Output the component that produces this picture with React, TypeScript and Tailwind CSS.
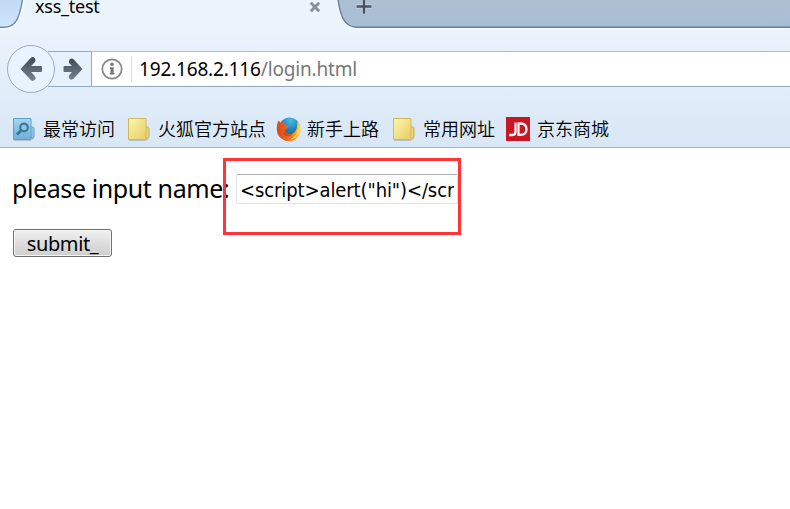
import React from "react";

const uiFont = "font-['Noto_Sans','Noto_Sans_CJK_SC',sans-serif]";

function TabStrip() {
  return (
    <div className="relative flex h-[28px] shrink-0 items-start">
      <svg className="absolute inset-0" width="790" height="31" viewBox="0 0 790 31">
        <defs>
          <linearGradient id="left" x1="0" y1="0" x2="0" y2="1">
            <stop offset="0" stopColor="#c3daf4" />
            <stop offset="1" stopColor="#cfe5fc" />
          </linearGradient>
          <linearGradient id="strip" x1="0" y1="0" x2="0" y2="1">
            <stop offset="0" stopColor="#adc0d3" />
            <stop offset="1" stopColor="#a9bdd5" />
          </linearGradient>
        </defs>
        <path d="M0 29.2H4C15 29 20 22 24 0" fill="none" stroke="#f5faff" strokeWidth="1.5" />
        <path d="M0 0H22.5C19 20 15 27.3 4 27.3H0Z" fill="url(#left)" />
        <path d="M22.5 0C19 20 15 27.3 4 27.3H0" fill="none" stroke="#7389a4" strokeWidth="1.4" />
        <path d="M337 0C340 22 346 29 359 29H790" fill="none" stroke="#f5faff" strokeWidth="1.5" />
        <path d="M338 0C341 20 346 27.3 358 27.3H790V0Z" fill="url(#strip)" />
        <path d="M338 0C341 20 346 27.3 358 27.3H790" fill="none" stroke="#657e99" strokeWidth="1.4" />
      </svg>
      <span className="relative ml-[35px] w-[274px] whitespace-nowrap text-[18px] leading-[12px] tracking-[-0.25px]">xss_test</span>
      <svg className="relative mt-[1px]" width="12" height="12" viewBox="0 0 12 12">
        <path d="M1.8 1.8 10.2 10.2M10.2 1.8 1.8 10.2" stroke="#87919c" strokeWidth="2.9" />
      </svg>
      <svg className="relative ml-[35px]" width="16" height="14" viewBox="0 0 16 14">
        <path d="M0 6.4H16M8 -2V14" stroke="#d2deea" strokeWidth="4" />
        <path d="M.5 6.4H15.5M8 -2V13.7" stroke="#465361" strokeWidth="2.5" />
      </svg>
    </div>
  );
}

function NavigationBar() {
  return (
    <div className="mt-[17px] flex h-[48px] shrink-0 items-center">
      <svg className="shrink-0" width="92" height="48" viewBox="0 0 92 48">
        <defs>
          <linearGradient id="arrow" x1="0" y1="0" x2="0" y2="1">
            <stop offset="0" stopColor="#3f4953" />
            <stop offset="1" stopColor="#778591" />
          </linearGradient>
        </defs>
        <path d="M48 6.5H91.5V41.5H48" fill="#e7f1fc" stroke="#94a8bf" />
        <circle cx="31" cy="24" r="23.5" fill="#e9f3fd" stroke="#98abc2" />
        <path d="M20.5 24 31 12.8Q33 11 35 13.5Q36.3 16 34.3 17.7L31 21H41Q42 21 42 22V26Q42 27 41 27H31L34.3 30.5Q36.3 32.5 35 34.5Q33 37 31 35.2Z" fill="url(#arrow)" />
        <path d="M82.5 24 73.5 14.2Q71.5 12.5 69.5 14.5Q68 17 69.7 18.7L72 21H64.5Q63.5 21 63.5 22V26Q63.5 27 64.5 27H72L69.7 29.5Q68 31.5 69.5 33.7Q71.5 35.5 73.5 33.8Z" fill="url(#arrow)" />
      </svg>
      <div className="flex h-[36px] flex-1 items-center border-y border-t-[#aebdce] border-b-[#8fa6be] bg-white">
        <svg className="ml-[9px] shrink-0" width="22" height="22" viewBox="0 0 22 22">
          <circle cx="11" cy="11" r="9.7" fill="none" stroke="#858585" strokeWidth="1.7" />
          <circle cx="11" cy="6.3" r="1.8" fill="#777" />
          <path d="M9 9.2H12.7V15H13.5V16.5H8.7V15H9.5V11H9Z" fill="#777" />
        </svg>
        <div className="ml-[8px] h-[26px] w-px bg-[#dddddd]" />
        <span className="ml-[7px] whitespace-nowrap text-[19px] leading-[26px] tracking-[-0.17px] text-[#777]">
          <span className="text-black">192.168.2.116</span>/login.html
        </span>
      </div>
    </div>
  );
}

function FolderIcon({ blue = false }: { blue?: boolean }) {
  return (
    <svg width="25" height="25" viewBox="0 0 25 25">
      <defs>
        <linearGradient id="yellow" x1="0" y1="0" x2="1" y2="1">
          <stop offset="0" stopColor="#fff5ae" />
          <stop offset="1" stopColor="#e8cd62" />
        </linearGradient>
        <linearGradient id="blue" x1="0" y1="0" x2="0" y2="1">
          <stop offset="0" stopColor="#a5d6ef" />
          <stop offset="1" stopColor="#70afd4" />
        </linearGradient>
      </defs>
      <path d="M2 23.4H18L21.5 21.5" fill="none" stroke="#9cabb4" strokeOpacity=".65" strokeWidth="1.3" />
      <path d="M18.5 10H20.5Q22 10 22 11.5V19.5Q22 21 20.5 21H18.5Z" fill={blue ? "#8fc5e3" : "#ecd778"} stroke={blue ? "#60a0c9" : "#c6ac4b"} />
      <path d="M1.5 1.5H19V21.5Q19 22.5 18 22.5H1.5Z" fill={blue ? "url(#blue)" : "url(#yellow)"} stroke={blue ? "#60a0c9" : "#d0b956"} />
      {blue && (
        <g fill="none" stroke="#3e789e" strokeWidth="2.2">
          <circle cx="12" cy="10.5" r="3.8" />
          <path d="M9 13.5 5 17.5" strokeWidth="3" />
        </g>
      )}
    </svg>
  );
}

function FirefoxIcon() {
  return (
    <svg width="25" height="25" viewBox="0 0 25 25">
      <defs>
        <radialGradient id="globe" cx=".55" cy=".15" r=".85">
          <stop offset="0" stopColor="#43c0e4" />
          <stop offset=".5" stopColor="#2583bd" />
          <stop offset="1" stopColor="#174b91" />
        </radialGradient>
        <linearGradient id="flame" x1="0" y1="0" x2="1" y2="0">
          <stop offset="0" stopColor="#d8481f" />
          <stop offset=".6" stopColor="#f0741c" />
          <stop offset="1" stopColor="#ffd747" />
        </linearGradient>
      </defs>
      <circle cx="13.5" cy="11" r="10.5" fill="url(#globe)" />
      <path d="M2.5 3.5 5 6 8 4.5 8.5 7.5 12.5 8.5 11.5 11 9.2 12.5C8 16 13 18 16.5 16.5C20.5 15 21.5 10 21 5L22 4.5C26 10 25.5 18 20 22C14 26 6 24 2.5 18.5C0 14 .5 8 2.5 3.5Z" fill="url(#flame)" />
      <path d="M23.5 8C26 15 20 23.5 12 22.5C19 21 22.5 16 22.3 8Z" fill="#ffd34f" />
      <path d="M7 16.5C9.5 20.5 14 19.5 16.5 17.5C13 18 10 16.5 9.2 13.5Z" fill="#d94b18" />
    </svg>
  );
}

function JdIcon() {
  return (
    <svg width="24" height="24" viewBox="0 0 24 24">
      <rect width="24" height="24" fill="#c81623" />
      <path d="M9.5 5.5V14.5Q9.5 18 6.5 18H3M12.5 6.5V17.8H14.5Q20.5 17.8 20.5 12.2Q20.5 6.5 14.5 6.5H11.5" fill="none" stroke="#fff2f3" strokeWidth="2.3" />
    </svg>
  );
}

const bookmarks = [
  { label: "最常访问", icon: <FolderIcon blue /> },
  { label: "火狐官方站点", icon: <FolderIcon /> },
  { label: "新手上路", icon: <FirefoxIcon /> },
  { label: "常用网址", icon: <FolderIcon /> },
  { label: "京东商城", icon: <JdIcon /> },
];

function BookmarksBar() {
  return (
    <nav className="mt-auto grid h-[36px] grid-cols-[115px_149px_116px_114px_auto] items-center pl-[12px]">
      {bookmarks.map(({ label, icon }) => (
        <div key={label} className="flex items-center">
          <span className="w-[31px] shrink-0">{icon}</span>
          <span className="whitespace-nowrap pb-[2px] font-['Noto_Sans_CJK_SC',sans-serif] text-[18px] font-[350] leading-[24px]">{label}</span>
        </div>
      ))}
    </nav>
  );
}

export default function App() {
  return (
    <div className={`flex h-[509px] w-[790px] flex-col overflow-hidden bg-white text-black ${uiFont}`}>
      <header className="flex h-[148px] shrink-0 flex-col border-b border-[#a5b7ce] bg-linear-to-b from-[#ebf3fc] from-20% to-[#d8e7f6]">
        <TabStrip />
        <NavigationBar />
        <BookmarksBar />
      </header>
      <main className="relative pl-[12px] pt-[26px]">
        <div className="flex h-[30px] items-center">
          <label htmlFor="name" className="w-[224px] whitespace-nowrap pb-[2px] text-[25px] leading-[28px] tracking-[-0.4px]">please input name:</label>
          <input id="name" readOnly defaultValue={'<script>alert("hi")</scr'} className="h-[30px] w-[222px] rounded-[2px] border border-[#e2e3ea] border-t-[#abadb3] bg-white px-[3px] pt-px font-['DejaVu_Sans_Condensed','DejaVu_Sans',sans-serif] text-[20px] font-stretch-condensed tracking-[-0.1px] outline-none" />
        </div>
        <button className="ml-px mt-[25px] flex h-[28px] w-[99px] items-center justify-center rounded-[3px] border border-[#707070] bg-linear-to-b from-[#f2f2f2] from-0% via-[#dddddd] via-50% to-[#cfcfcf] pt-[2px] text-[20px] leading-[24px] tracking-[-0.4px] shadow-[inset_0_0_0_1px_#f5f5f5]">submit_</button>
        <div className="pointer-events-none absolute left-[223px] top-[10px] h-[77px] w-[238px] border-[3px] border-[#ff3438]" />
      </main>
    </div>
  );
}
